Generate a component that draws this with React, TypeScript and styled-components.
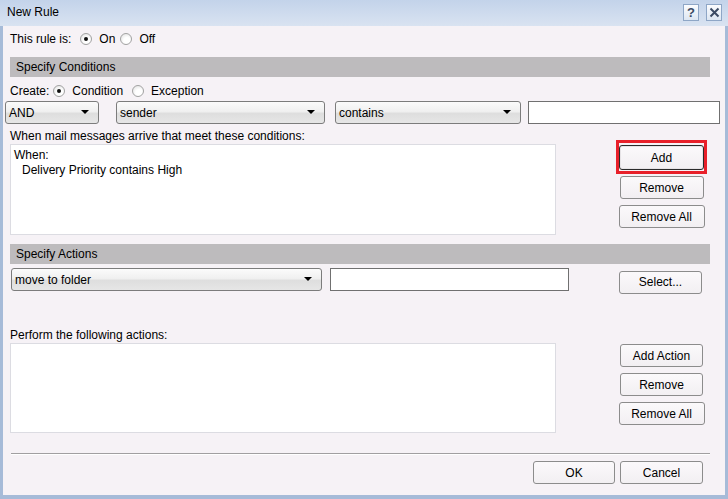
import React, { useState } from 'react';
import styled, { createGlobalStyle } from 'styled-components';

const GlobalStyle = createGlobalStyle`
    html, body {
        margin: 0;
        padding: 0;
        background: #f6f2f6;
    }
    body {
        font-family: "Liberation Sans", Arial, sans-serif;
        font-size: 12px;
        color: #000;
    }
`;

const Window = styled.div`
    width: 728px;
    height: 499px;
    display: flex;
    flex-direction: column;
    background: #a6bbd8;
    box-sizing: border-box;
`;

const TitleBar = styled.div`
    height: 26px;
    flex: none;
    display: flex;
    align-items: center;
    justify-content: space-between;
    padding: 0 6px 0 7px;
    background: linear-gradient(#c3d3ea, #d9e3f1);
    box-sizing: border-box;
`;

const TitleText = styled.span`
    font-size: 12px;
    margin-top: -2px;
`;

const TitleButtons = styled.div`
    display: flex;
    gap: 7px;
    margin-top: -2px;
`;

const TitleButton = styled.div`
    width: 16px;
    height: 17px;
    box-sizing: border-box;
    border: 1px solid #8ea6c6;
    background: linear-gradient(#fbfcfe, #dde6f2);
    display: flex;
    align-items: center;
    justify-content: center;
    font-weight: bold;
    font-size: 13px;
    color: #3b4a63;
`;

const Client = styled.div`
    flex: 1;
    margin: 0 3px 4px 3px;
    background: #f6f2f6;
    padding: 4px 15px 0 7px;
    display: flex;
    flex-direction: column;
`;

const Row = styled.div<{ $top?: number; $height?: number }>`
    display: flex;
    align-items: center;
    margin-top: ${p => p.$top ?? 0}px;
    height: ${p => p.$height ?? 18}px;
`;

const SectionHeader = styled.div<{ $top: number }>`
    margin-top: ${p => p.$top}px;
    height: 20px;
    background: #bdbbbd;
    padding-left: 6px;
    display: flex;
    align-items: center;
`;

const RadioLabel = styled.label<{ $gap: number }>`
    display: flex;
    align-items: center;
    margin-left: ${p => p.$gap}px;
    cursor: default;
`;

const RadioCircle = styled.span<{ $checked: boolean }>`
    width: 10px;
    height: 10px;
    border-radius: 50%;
    border: 1px solid #a2a2a2;
    background: radial-gradient(circle at 60% 65%, #ffffff 35%, #dcdcdc 100%);
    display: inline-flex;
    align-items: center;
    justify-content: center;
    margin-right: 7px;
    &::after {
        content: '';
        width: 4px;
        height: 4px;
        border-radius: 50%;
        background: ${p => (p.$checked ? '#111' : 'transparent')};
    }
`;

const Select = styled.div<{ $width: number; $left?: number }>`
    width: ${p => p.$width}px;
    height: 23px;
    margin-left: ${p => p.$left ?? 0}px;
    box-sizing: border-box;
    border: 1px solid #7c7c7c;
    border-radius: 3px;
    background: linear-gradient(#fbfbfb 0%, #f0f0f0 45%, #dedede 55%, #e6e6e6 100%);
    display: flex;
    align-items: center;
    justify-content: space-between;
    padding: 0 9px 0 3px;
    flex: none;
`;

const Arrow = styled.span`
    width: 0;
    height: 0;
    border-left: 4px solid transparent;
    border-right: 4px solid transparent;
    border-top: 4px solid #000;
    margin-top: -1px;
`;

const TextBox = styled.div<{ $width: number; $left: number }>`
    width: ${p => p.$width}px;
    height: 23px;
    margin-left: ${p => p.$left}px;
    box-sizing: border-box;
    border: 1px solid #707070;
    background: #fff;
    flex: none;
`;

const RuleArea = styled.div<{ $top: number; $listHeight: number; $buttonsTop: number }>`
    display: grid;
    grid-template-columns: 546px 91px;
    grid-template-rows: 16px ${p => p.$listHeight}px;
    column-gap: 60px;
    margin-top: ${p => p.$top}px;
    & > :last-child {
        grid-column: 2;
        grid-row: 1 / span 2;
        padding-top: ${p => p.$buttonsTop}px;
    }
`;

const AreaLabel = styled.div`
    display: flex;
    align-items: center;
`;

const ListBox = styled.div`
    background: #fff;
    border: 1px solid #dcdce2;
    padding: 3px 3px;
    line-height: 15px;
`;

const ListIndent = styled.div`
    padding-left: 8px;
`;

const ButtonColumn = styled.div`
    display: flex;
    flex-direction: column;
    align-items: center;
`;

const Button = styled.button<{ $width: number; $top?: number; $height?: number; $default?: boolean }>`
    width: ${p => p.$width}px;
    height: ${p => p.$height ?? 23}px;
    margin-top: ${p => p.$top ?? 0}px;
    box-sizing: border-box;
    border: 1px solid ${p => (p.$default ? '#2a2a2a' : '#8c8c8c')};
    border-radius: 3px;
    background: linear-gradient(#fbf9fb, #f2eff2);
    box-shadow: ${p => (p.$default ? 'inset 0 0 0 1px #e6e3e6' : 'none')};
    font-family: "Liberation Sans", Arial, sans-serif;
    font-size: 12px;
    color: #000;
    padding: 0;
    flex: none;
`;

const Highlight = styled.div`
    border: 3px solid #e8202a;
    padding: 2px 0 1px 0;
    display: flex;
`;

const Separator = styled.div`
    margin-top: 20px;
    margin-left: 1px;
    border-top: 1px solid #a19fa1;
    border-bottom: 1px solid #ffffff;
`;

const Footer = styled.div`
    display: flex;
    justify-content: flex-end;
    gap: 5px;
    padding-right: 7px;
    margin-top: 6px;
`;

function Radio(props: { label: string; checked: boolean; gap: number; onPick: () => void }) {
    return (
        <RadioLabel $gap={props.gap} onClick={props.onPick}>
            <RadioCircle $checked={props.checked} />
            {props.label}
        </RadioLabel>
    );
}

function Dropdown(props: { value: string; width: number; left?: number }) {
    return (
        <Select $width={props.width} $left={props.left}>
            <span>{props.value}</span>
            <Arrow />
        </Select>
    );
}

export default function App() {
    const [ruleOn, setRuleOn] = useState(true);
    const [create, setCreate] = useState('condition');

    return (
        <>
            <GlobalStyle />
            <Window>
                <TitleBar>
                    <TitleText>New Rule</TitleText>
                    <TitleButtons>
                        <TitleButton>?</TitleButton>
                        <TitleButton>
                            <svg width="11" height="11" viewBox="0 0 11 11">
                                <path d="M1.5 1.5 L9.5 9.5 M9.5 1.5 L1.5 9.5" stroke="#3b4a63" strokeWidth="2" />
                            </svg>
                        </TitleButton>
                    </TitleButtons>
                </TitleBar>
                <Client>
                    <Row>
                        <span>This rule is:</span>
                        <Radio label="On" checked={ruleOn} gap={9} onPick={() => setRuleOn(true)} />
                        <Radio label="Off" checked={!ruleOn} gap={5} onPick={() => setRuleOn(false)} />
                    </Row>

                    <SectionHeader $top={9}>Specify Conditions</SectionHeader>
                    <Row $top={5}>
                        <span>Create:</span>
                        <Radio label="Condition" checked={create === 'condition'} gap={4} onPick={() => setCreate('condition')} />
                        <Radio label="Exception" checked={create === 'exception'} gap={9} onPick={() => setCreate('exception')} />
                    </Row>
                    <Row $top={1} $height={23}>
                        <Dropdown value="AND" width={94} left={-5} />
                        <Dropdown value="sender" width={209} left={17} />
                        <Dropdown value="contains" width={186} left={10} />
                        <TextBox $width={192} $left={7} />
                    </Row>

                    <RuleArea $top={4} $listHeight={91} $buttonsTop={12}>
                        <AreaLabel>When mail messages arrive that meet these conditions:</AreaLabel>
                        <ListBox>
                            <div>When:</div>
                            <ListIndent>Delivery Priority contains High</ListIndent>
                        </ListBox>
                        <ButtonColumn>
                            <Highlight>
                                <Button $width={85} $height={25} $default>Add</Button>
                            </Highlight>
                            <Button $width={84} $top={2}>Remove</Button>
                            <Button $width={86} $top={6}>Remove All</Button>
                        </ButtonColumn>
                    </RuleArea>

                    <SectionHeader $top={9}>Specify Actions</SectionHeader>
                    <Row $top={4} $height={23}>
                        <Dropdown value="move to folder" width={311} left={1} />
                        <TextBox $width={239} $left={8} />
                        <Button $width={83} $top={5} style={{ marginLeft: 50 }}>Select...</Button>
                    </Row>

                    <RuleArea $top={36} $listHeight={90} $buttonsTop={17}>
                        <AreaLabel>Perform the following actions:</AreaLabel>
                        <ListBox />
                        <ButtonColumn>
                            <Button $width={83}>Add Action</Button>
                            <Button $width={83} $top={6}>Remove</Button>
                            <Button $width={86} $top={6}>Remove All</Button>
                        </ButtonColumn>
                    </RuleArea>

                    <Separator />
                    <Footer>
                        <Button $width={82}>OK</Button>
                        <Button $width={83}>Cancel</Button>
                    </Footer>
                </Client>
            </Window>
        </>
    );
}
